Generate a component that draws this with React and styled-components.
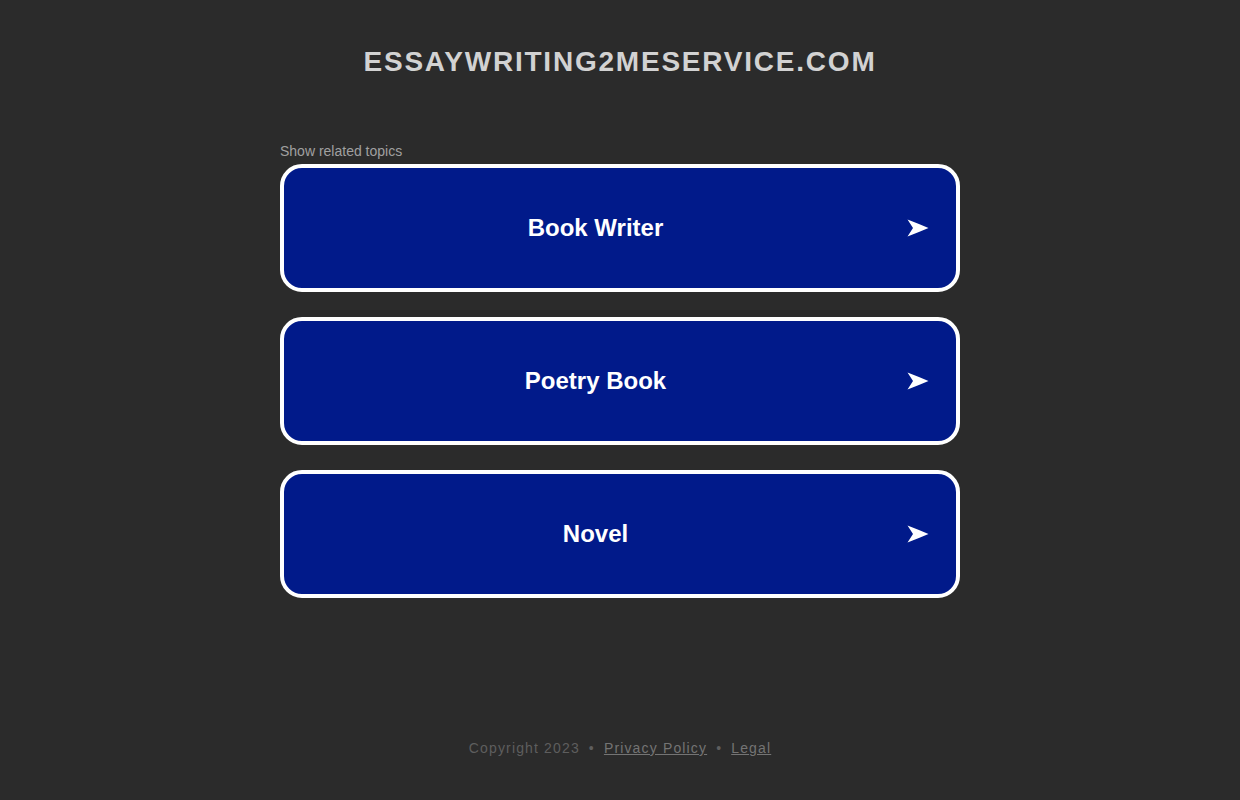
import React from "react";
import styled, { createGlobalStyle } from "styled-components";

const Global = createGlobalStyle`
  html, body { margin: 0; padding: 0; background: #2b2b2b; }
  body { font-family: Arial, "Liberation Sans", Helvetica, sans-serif; }
`;

const Page = styled.div`
  width: 100%;
  min-height: 800px;
  display: flex;
  flex-direction: column;
  align-items: center;
`;

const Title = styled.h1`
  margin: 0;
  padding-top: 46px;
  font-size: 28px;
  line-height: 32px;
  font-weight: 700;
  letter-spacing: 1.78px;
  color: #d2d2d2;
  text-align: center;
`;

const Related = styled.section`
  width: 680px;
  margin-top: 65px;
  display: flex;
  flex-direction: column;
`;

const RelatedLabel = styled.div`
  font-size: 14px;
  line-height: 16px;
  color: #a0a0a0;
  margin-bottom: 5px;
`;

const Cards = styled.div`
  display: flex;
  flex-direction: column;
  gap: 25px;
`;

const Card = styled.a`
  box-sizing: border-box;
  height: 128px;
  border: 4px solid #ffffff;
  border-radius: 22px;
  background: #011a8a;
  display: flex;
  align-items: center;
  padding-right: 27px;
  text-decoration: none;
  cursor: pointer;
`;

const CardLabel = styled.span`
  flex: 1;
  text-align: center;
  font-size: 24px;
  font-weight: 700;
  color: #ffffff;
`;

const Arrow = styled.svg`
  width: 22px;
  height: 18px;
  display: block;
`;

const Footer = styled.footer`
  margin-top: 142px;
  font-size: 14px;
  line-height: 16px;
  letter-spacing: 1.15px;
  color: #5e5e5e;
  text-align: center;
`;

const FooterLink = styled.a`
  color: #747474;
  text-decoration: underline;
`;

const Dot = styled.span`
  margin: 0 9px;
`;

const topics = ["Book Writer", "Poetry Book", "Novel"];

export default function App() {
  return (
    <>
      <Global />
      <Page>
        <Title>ESSAYWRITING2MESERVICE.COM</Title>
        <Related>
          <RelatedLabel>Show related topics</RelatedLabel>
          <Cards>
            {topics.map((t) => (
              <Card key={t}>
                <CardLabel>{t}</CardLabel>
                <Arrow viewBox="0 0 22 18">
                  <path d="M0.5 0.5 Q11 4.5 21.5 9 Q11 13.5 0.5 17.5 L6 9 Z" fill="#ffffff" />
                </Arrow>
              </Card>
            ))}
          </Cards>
        </Related>
        <Footer>
          Copyright 2023<Dot>•</Dot>
          <FooterLink>Privacy Policy</FooterLink>
          <Dot>•</Dot>
          <FooterLink>Legal</FooterLink>
        </Footer>
      </Page>
    </>
  );
}
